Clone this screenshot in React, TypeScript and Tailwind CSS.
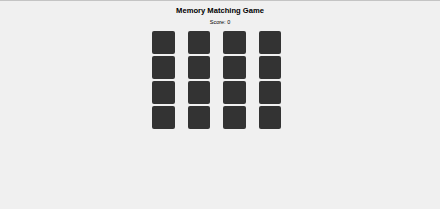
const cards = Array.from({ length: 16 }, (_, i) => i);

export default function App() {
  return (
    <div className="min-h-screen border-t border-[#c4c4c4] bg-[#f0f0f0] font-['Liberation_Sans',Arial,sans-serif] text-black">
      <div className="flex flex-col items-center">
        <h1 className="pt-[6px] text-[7.6px] font-bold leading-none">Memory Matching Game</h1>
        <p className="mt-[5px] text-[5.5px] leading-none">Score: 0</p>
        <div className="mt-[6.2px] grid grid-cols-[repeat(4,35.5px)] gap-y-[2.3px]">
          {cards.map((c) => (
            <div
              key={c}
              className="ml-[3px] h-[22.7px] w-[22.7px] rounded-[2px] bg-[#333333]"
            />
          ))}
        </div>
      </div>
    </div>
  );
}
